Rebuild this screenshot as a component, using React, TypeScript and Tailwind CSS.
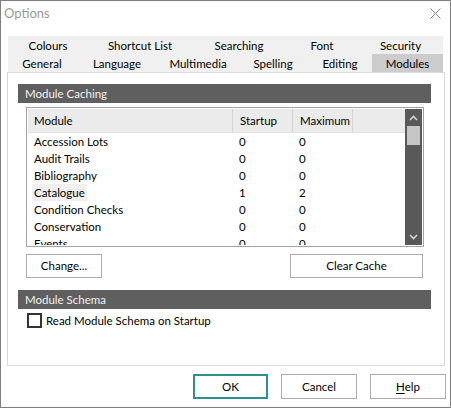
import React from "react";

const rows = [
  { name: "Accession Lots", start: "0", max: "0" },
  { name: "Audit Trails", start: "0", max: "0" },
  { name: "Bibliography", start: "0", max: "0" },
  { name: "Catalogue", start: "1", max: "2", hl: true },
  { name: "Condition Checks", start: "0", max: "0" },
  { name: "Conservation", start: "0", max: "0" },
  { name: "Events", start: "0", max: "0" },
];

const topTabs = [
  { label: "Colours", w: "w-[80px]" },
  { label: "Shortcut List", w: "w-[104px]" },
  { label: "Searching", w: "w-[94px]" },
  { label: "Font", w: "w-[72px]" },
  { label: "Security", w: "w-[85px]" },
];

const bottomTabs = [
  { label: "General", w: "w-[68px]" },
  { label: "Language", w: "w-[82px]" },
  { label: "Multimedia", w: "w-[80px]" },
  { label: "Spelling", w: "w-[70px]" },
  { label: "Editing", w: "w-[64px]" },
  { label: "Modules", w: "w-[71px]", active: true },
];

function Chevron({ down }: { down?: boolean }) {
  return (
    <svg width="9" height="6" viewBox="0 0 9 6" className={down ? "rotate-180" : ""}>
      <polyline points="1,5 4.5,1.5 8,5" fill="none" stroke="#d4d4d4" strokeWidth="1.6" />
    </svg>
  );
}

export default function App() {
  return (
    <div className="w-[451px] h-[408px] bg-white border border-[#7f7f7f] flex flex-col text-[11.5px] text-black font-['Lato',sans-serif] leading-none overflow-hidden">
      {/* title bar */}
      <div className="h-[35px] shrink-0 flex justify-between pl-[3px] pr-[9px]">
        <span className="text-[#9a9a9a] text-[13px] pt-[6px]">Options</span>
        <svg width="11" height="11" viewBox="0 0 11 11" className="mt-[7px]">
          <path d="M0.5 0.5 L10.5 10.5 M10.5 0.5 L0.5 10.5" stroke="#8a8a8a" strokeWidth="1" />
        </svg>
      </div>

      {/* tabs */}
      <div className="ml-[7px] w-[435px] shrink-0 bg-[#f0f0f0] flex flex-col">
        <div className="flex h-[18px]">
          {topTabs.map((t) => (
            <div key={t.label} className={`${t.w} flex items-center justify-center pt-[2px]`}>
              {t.label}
            </div>
          ))}
        </div>
        <div className="flex h-[18px]">
          {bottomTabs.map((t) => (
            <div
              key={t.label}
              className={`${t.w} flex items-center justify-center pt-[1px] ${t.active ? "bg-[#cccccc]" : ""}`}
            >
              {t.label}
            </div>
          ))}
        </div>
      </div>

      {/* panel */}
      <div className="ml-[6px] w-[438px] h-[294px] shrink-0 border border-[#d9d9d9] flex flex-col">
        <div className="ml-[10px] mt-[11px] w-[413px] h-[19px] shrink-0 bg-[#5e5f5e] text-[#f2f2f2] flex items-center pl-[7px]">
          Module Caching
        </div>

        <div className="ml-[18px] mt-[4px] w-[398px] h-[140px] shrink-0 border border-[#a3a3a3] p-[1px] flex overflow-hidden">
          <div className="flex-1 flex flex-col overflow-hidden">
            <div className="h-[24px] shrink-0 bg-[#ebebeb] border-b border-[#e2e2e2] flex">
              <div className="w-[205px] border-r border-[#d4d4d4] flex items-center pl-[6px]">Module</div>
              <div className="w-[60px] border-r border-[#d4d4d4] flex items-center pl-[7px]">Startup</div>
              <div className="w-[60px] border-r border-[#d4d4d4] flex items-center pl-[7px]">Maximum</div>
              <div className="flex-1" />
            </div>
            {rows.map((r) => (
              <div key={r.name} className="h-[17px] flex shrink-0 items-center">
                <div className="w-[205px] pl-[4px]">
                  <span className={`px-[2px] py-[2px] ${r.hl ? "bg-[#f0f0f0]" : ""}`}>{r.name}</span>
                </div>
                <div className="w-[60px] pl-[6px]">{r.start}</div>
                <div className="w-[60px] pl-[6px]">{r.max}</div>
              </div>
            ))}
          </div>
          {/* scrollbar */}
          <div className="w-[17px] h-[136px] shrink-0 bg-[#595959] flex flex-col items-center">
            <div className="h-[17px] flex items-center justify-center">
              <Chevron />
            </div>
            <div className="w-[13px] h-[19px] bg-[#c6c6c6]" />
            <div className="flex-1" />
            <div className="h-[17px] flex items-center justify-center">
              <Chevron down />
            </div>
          </div>
        </div>

        <div className="ml-[18px] mt-[7px] w-[397px] flex justify-between">
          <button className="w-[76px] h-[24px] border border-[#adadad] bg-white flex items-center justify-center">
            Change...
          </button>
          <button className="w-[133px] h-[24px] border border-[#adadad] bg-white flex items-center justify-center">
            Clear Cache
          </button>
        </div>

        <div className="ml-[10px] mt-[12px] w-[413px] h-[19px] shrink-0 bg-[#5e5f5e] text-[#f2f2f2] flex items-center pl-[7px]">
          Module Schema
        </div>

        <label className="ml-[19px] mt-[4px] flex items-center gap-[4px]">
          <span className="w-[15px] h-[15px] border-2 border-[#333333] bg-white" />
          <span>Read Module Schema on Startup</span>
        </label>
      </div>

      {/* dialog buttons */}
      <div className="mt-[8px] flex justify-end gap-[13px] pr-[4px]">
        <button className="w-[75px] h-[25px] border-2 border-[#2b9090] bg-white flex items-center justify-center">
          OK
        </button>
        <button className="w-[76px] h-[25px] border border-[#adadad] bg-white flex items-center justify-center">
          Cancel
        </button>
        <button className="w-[76px] h-[25px] border border-[#adadad] bg-white flex items-center justify-center">
          <span>
            <span className="underline underline-offset-2">H</span>elp
          </span>
        </button>
      </div>
    </div>
  );
}
